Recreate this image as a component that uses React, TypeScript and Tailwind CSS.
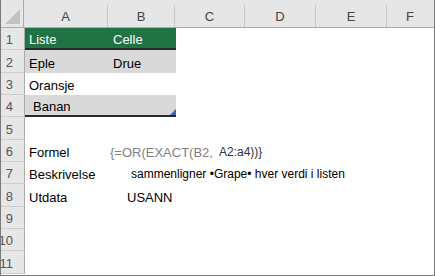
import React from "react";

const rowH = [22, 23, 22, 22, 23, 22, 22, 23, 22, 22, 23];
const font = { fontFamily: '"Liberation Sans", Arial, sans-serif' };

function RowHead({ n }: { n: number }) {
  return (
    <div className="w-[24px] shrink-0 h-full bg-[#e6e6e6] border-r border-b border-r-[#ababab] border-b-[#cdcdcd] flex items-center justify-start overflow-hidden">
      <span className="w-[12px] shrink-0 flex justify-end text-[13px] leading-[15px] text-[#555] pt-[2px]">{n}</span>
    </div>
  );
}

function ColHead({ label, w }: { label: string; w: string }) {
  return (
    <div className={`${w} h-[22px] border-r border-[#c8c8c8] flex items-center justify-center text-[13px] text-[#444] pt-[1px]`}>
      {label}
    </div>
  );
}

export default function App() {
  return (
    <div className="w-[435px] h-[276px] bg-white border-r border-b border-l border-[#7a7a7a] overflow-hidden" style={font}>
      {/* column header */}
      <div className="flex h-[28px] bg-[#e6e6e6] border-b border-[#ababab]">
        <div className="w-[23px] shrink-0 h-full border-r border-[#ababab] flex items-end justify-end pr-[2px] pb-[2px]">
          <svg width="16" height="16" viewBox="0 0 16 16">
            <polygon points="15,0 15,15 0,15" fill="#c3c3c3" />
          </svg>
        </div>
        <div className="flex items-end h-full">
          <ColHead label="A" w="w-[84px]" />
          <ColHead label="B" w="w-[67px]" />
          <ColHead label="C" w="w-[70px]" />
          <ColHead label="D" w="w-[71px]" />
          <ColHead label="E" w="w-[71px]" />
          <div className="w-[46px] h-[22px] flex items-center justify-center text-[13px] text-[#444] pt-[1px]">F</div>
        </div>
      </div>

      {/* row 1 */}
      <div className="flex" style={{ height: rowH[0] }}>
        <RowHead n={1} />
        <div className="w-[84px] h-full bg-[#217346] border-b-2 border-[#2b2b2b] flex items-end pl-[4px] pb-[1px] text-[13px] leading-[15px] text-white">Liste</div>
        <div className="w-[67px] h-full bg-[#217346] border-b-2 border-[#2b2b2b] flex items-end pl-[4px] pb-[1px] text-[13px] leading-[15px] text-white">Celle</div>
      </div>

      {/* row 2 */}
      <div className="flex" style={{ height: rowH[1] }}>
        <RowHead n={2} />
        <div className="w-[84px] h-full bg-[#d9d9d9] flex items-end pl-[4px] pb-[2px] text-[13px] leading-[15px] text-black">Eple</div>
        <div className="w-[67px] h-full bg-[#d9d9d9] flex items-end pl-[4px] pb-[2px] text-[13px] leading-[15px] text-black">Drue</div>
      </div>

      {/* row 3 */}
      <div className="flex" style={{ height: rowH[2] }}>
        <RowHead n={3} />
        <div className="w-[84px] h-full flex items-end pl-[4px] pb-[2px] text-[13px] leading-[15px] text-black">Oransje</div>
      </div>

      {/* row 4 */}
      <div className="flex" style={{ height: rowH[3] }}>
        <RowHead n={4} />
        <div className="w-[84px] h-full bg-[#d9d9d9] border-b-2 border-[#2b2b2b] flex items-end pl-[8px] pb-[1px] text-[13px] leading-[15px] text-black">Banan</div>
        <div className="w-[67px] h-full bg-[#d9d9d9] border-b-2 border-[#2b2b2b] flex items-end justify-end">
          <svg width="6" height="6" viewBox="0 0 6 6" className="block">
            <polygon points="6,0 6,6 0,6" fill="#3f5fbf" />
          </svg>
        </div>
      </div>

      {/* row 5 */}
      <div className="flex" style={{ height: rowH[4] }}>
        <RowHead n={5} />
      </div>

      {/* row 6 */}
      <div className="flex" style={{ height: rowH[5] }}>
        <RowHead n={6} />
        <div className="w-[84px] h-full flex items-end pl-[4px] pb-[2px] text-[13px] leading-[15px] text-black">Formel</div>
        <div className="w-[67px] h-full flex items-end pl-[1px] pb-[2px] leading-[15px] whitespace-nowrap">
          <span className="text-[13px] text-[#7f7f7f]">{"{=OR(EXACT(B2,"}</span>
          <span className="text-[12px] text-[#333] ml-[6px]">{"A2:a4))}"}</span>
        </div>
      </div>

      {/* row 7 */}
      <div className="flex" style={{ height: rowH[6] }}>
        <RowHead n={7} />
        <div className="w-[84px] h-full flex items-end pl-[4px] pb-[2px] text-[13px] leading-[15px] text-black">Beskrivelse</div>
        <div className="w-[67px] h-full flex items-end pl-[22px] pb-[2px] text-[12px] leading-[15px] text-black whitespace-nowrap">
          sammenligner •Grape• hver verdi i listen
        </div>
      </div>

      {/* row 8 */}
      <div className="flex" style={{ height: rowH[7] }}>
        <RowHead n={8} />
        <div className="w-[84px] h-full flex items-end pl-[4px] pb-[2px] text-[13px] leading-[15px] text-black">Utdata</div>
        <div className="w-[67px] h-full flex items-end pl-[18px] pb-[2px] text-[13px] leading-[15px] text-black whitespace-nowrap">USANN</div>
      </div>

      {[9, 10, 11].map((n) => (
        <div key={n} className="flex" style={{ height: rowH[n - 1] }}>
          <RowHead n={n} />
        </div>
      ))}
    </div>
  );
}
